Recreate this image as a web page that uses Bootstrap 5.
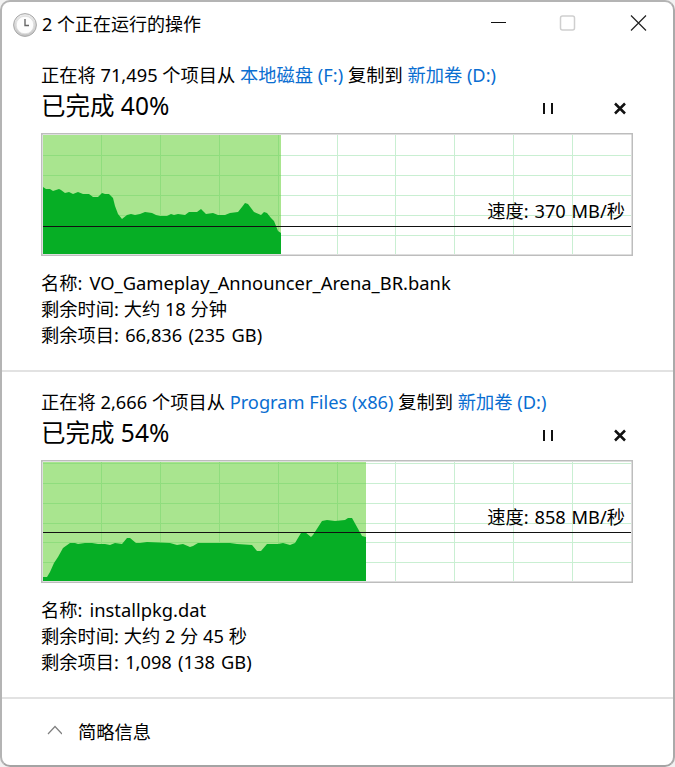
<!DOCTYPE html>
<html lang="zh">
<head>
<meta charset="utf-8">
<title>2 个正在运行的操作</title>
<link href="https://cdn.jsdelivr.net/npm/bootstrap@5.3.0/dist/css/bootstrap.min.css" rel="stylesheet">
<style>
html,body{margin:0;background:#f2f2f2;height:767px;overflow:hidden}
body{font-family:"Noto Sans","Noto Sans CJK SC",sans-serif;font-size:18.25px;line-height:26px;color:#000}
.win{width:675px;height:767px;border:2px solid #b4b4b4;border-bottom-color:#a4a4a4;border-right-color:#aaa;border-radius:10px;background:#fff;overflow:hidden}
.ttl{height:43px;padding:8px 0 0 11px}
.clk{width:24px;height:24px;flex:none;margin-top:3px}
.ttxt{margin-left:5px;font-size:18px;line-height:26px;margin-top:1px}
.wbtns{margin-left:auto;padding:5px 25px 0 0}
.wbtns svg{display:block}
.sec{padding:0 39px}
.sec1{height:327px;padding-top:17px;border-bottom:2px solid #e2e2e2}
.sec2{height:327px;padding-top:17px;border-bottom:2px solid #e2e2e2}
.lnk{color:#0a6ed1;text-decoration:none}
.pct{font-size:24.5px;line-height:36px;height:32px}
.ctl{padding-top:9px}
.ctl svg{display:block}
.graph{position:relative;width:592px;height:123px;margin-top:13px;margin-bottom:14px}
.graph svg{display:block}
.spd{position:absolute;right:8px;top:65px;line-height:26px;word-spacing:1px}
.spd2{top:44px}
.foot{padding-left:44px;padding-top:20px}
.info{line-height:26px}
.nm{margin-left:7px;font-size:18.35px}
.cnt{word-spacing:1.5px}
</style>
</head>
<body>
<div class="win d-flex flex-column">
  <div class="ttl d-flex">
    <svg class="clk" viewBox="0 0 24 24"><defs><linearGradient id="cg" x1="0" y1="0" x2="0" y2="1"><stop offset="0" stop-color="#ececec"/><stop offset="1" stop-color="#c4c4c4"/></linearGradient></defs><circle cx="12" cy="12" r="11.400" fill="url(#cg)" stroke="#a8a8a8"/><circle cx="12" cy="12" r="8.800" fill="#fdfdfd" stroke="#dcdcdc" stroke-width="0.800"/><path d="M12 6v6.500h4" fill="none" stroke="#666" stroke-width="1.400"/></svg>
    <div class="ttxt">2 个正在运行的操作</div>
    <div class="wbtns d-flex">
      <svg width="160" height="18" viewBox="0 0 160 18"><path d="M3 7.500h15" stroke="#111" stroke-width="1"/><rect x="72.500" y="1" width="14" height="14" rx="2" fill="none" stroke="#cfcfcf" stroke-width="1.500"/><path d="M143 .5l15 15M158 .5l-15 15" stroke="#222" stroke-width="1.200" fill="none"/></svg>
    </div>
  </div>

  <div class="sec sec1">
    <div>正在将 71,495 个项目从 <a class="lnk" href="#">本地磁盘 (F:)</a> 复制到 <a class="lnk" href="#">新加卷 (D:)</a></div>
    <div class="d-flex justify-content-between"><div class="pct">已完成 40%</div>
      <div class="ctl"><svg width="94" height="20" viewBox="0 0 94 20"><path d="M4 6v11M12 6v11" stroke="#111" stroke-width="2"/><path d="M75 6.500l10 10M85 6.500l-10 10" stroke="#111" stroke-width="2.500"/></svg></div></div>
    <div class="graph">
      <svg width="592" height="123" viewBox="41 133 592 123">
        <rect x="41.750" y="133.750" width="590.500" height="121.500" fill="#fff" stroke="#bdbdbd" stroke-width="1.500"/>
        <g stroke="#c9efd2" stroke-width="1"><path d="M101.500 135v119M160.500 135v119M219.500 135v119M278.500 135v119M337.500 135v119M395.500 135v119M454.500 135v119M513.500 135v119M572.500 135v119"/><path d="M43 155.500h588M43 175.500h588M43 195.500h588M43 215.500h588M43 235.500h588"/></g>
        <rect x="43" y="135" width="238" height="119" fill="#a9e58f"/>
        <g stroke="#8fdd7d" stroke-width="1"><path d="M101.500 135v119M160.500 135v119M219.500 135v119M278.500 135v119"/><path d="M43 155.500h238M43 175.500h238M43 195.500h238M43 215.500h238M43 235.500h238"/></g>
        <polygon fill="#06ae25" points="43,187 46,189 50,189 53,191 56,190 59,189 61,190 65,193 69,192 73,194 78,192 83,194 89,194 93,197 98,197 102,193 105,194 109,194 113,198 115,206 118,214 122,219 127,215 131,214 135,215 140,214 145,212 152,213 156,215 160,216 167,216 171,214 174,215 178,214 185,215 189,212 197,212 201,209 206,214 213,213 218,215 225,215 230,213 238,212 242,207 245,203 248,204 254,212 261,215 264,212 267,213 271,218 274,221 278,231 281,233 281,254 43,254"/>
        <path d="M43 226.500h588" stroke="#111" stroke-width="1"/>
      </svg>
      <div class="spd">速度: 370 MB/秒</div>
    </div>
    <div class="info">名称:<span class="nm">VO_Gameplay_Announcer_Arena_BR.bank</span></div>
    <div class="info">剩余时间: 大约 18 分钟</div>
    <div class="info cnt">剩余项目: 66,836 (235 GB)</div>
  </div>

  <div class="sec sec2">
    <div>正在将 2,666 个项目从 <a class="lnk" href="#">Program Files (x86)</a> 复制到 <a class="lnk" href="#">新加卷 (D:)</a></div>
    <div class="d-flex justify-content-between"><div class="pct">已完成 54%</div>
      <div class="ctl"><svg width="94" height="20" viewBox="0 0 94 20"><path d="M4 6v11M12 6v11" stroke="#111" stroke-width="2"/><path d="M75 6.500l10 10M85 6.500l-10 10" stroke="#111" stroke-width="2.500"/></svg></div></div>
    <div class="graph">
      <svg width="592" height="123" viewBox="41 460 592 123">
        <rect x="41.750" y="460.750" width="590.500" height="121.500" fill="#fff" stroke="#bdbdbd" stroke-width="1.500"/>
        <g stroke="#c9efd2" stroke-width="1"><path d="M101.500 462v119M160.500 462v119M219.500 462v119M278.500 462v119M337.500 462v119M395.500 462v119M454.500 462v119M513.500 462v119M572.500 462v119"/><path d="M43 463.500h588M43 483.500h588M43 503.500h588M43 523.500h588M43 542.500h588M43 562.500h588"/></g>
        <rect x="43" y="462" width="323" height="119" fill="#a9e58f"/>
        <g stroke="#8fdd7d" stroke-width="1"><path d="M101.500 462v119M160.500 462v119M219.500 462v119M278.500 462v119M337.500 462v119"/><path d="M43 463.500h323M43 483.500h323M43 503.500h323M43 523.500h323M43 542.500h323M43 562.500h323"/></g>
        <polygon fill="#06ae25" points="43,577 47,577 50,572 54,563 58,557 63,548 70,543 75,543 78,544 85,543 92,543 98,544 105,544 110,545 115,543 122,544 127,538 130,538 136,543 140,543 147,542 170,543 177,545 183,544 190,547 193,546 198,543 217,543 230,543 237,544 252,545 257,551 261,551 267,544 278,544 283,543 290,545 295,543 301,533 305,532 311,537 313,535 322,521 327,520 335,521 345,520 348,518 352,518 362,536 366,537 366,581 43,581"/>
        <path d="M43 532.500h588" stroke="#111" stroke-width="1"/>
      </svg>
      <div class="spd spd2">速度: 858 MB/秒</div>
    </div>
    <div class="info">名称:<span class="nm">installpkg.dat</span></div>
    <div class="info">剩余时间: 大约 2 分 45 秒</div>
    <div class="info cnt">剩余项目: 1,098 (138 GB)</div>
  </div>

  <div class="foot d-flex">
    <svg width="16" height="26" viewBox="0 0 16 26" class="me-3"><path d="M2 15l7-7.500 7 7.500" fill="none" stroke="#808080" stroke-width="1.200"/></svg>
    <div>简略信息</div>
  </div>
</div>
</body>
</html>
